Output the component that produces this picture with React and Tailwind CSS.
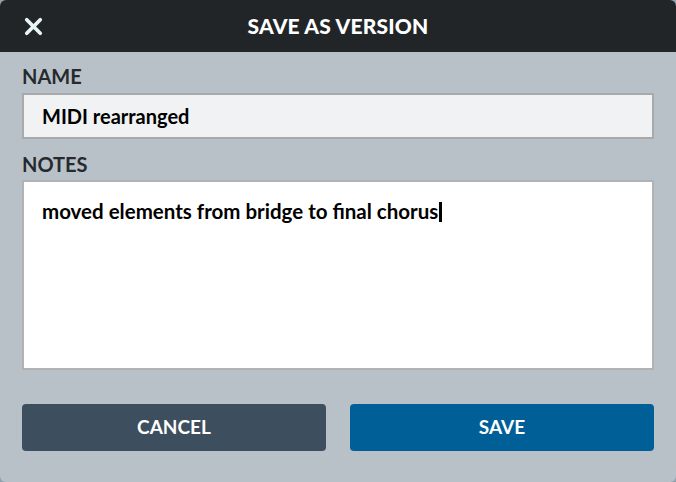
import { X } from "lucide-react";

export default function App() {
  return (
    <div className="h-[482px] w-[676px] bg-[#8fa3ad] font-['Lato',sans-serif]">
      <div className="flex h-full flex-col overflow-hidden rounded-[6px] bg-[#b9c1c8]">
        <div className="relative flex h-[52px] shrink-0 items-center justify-center bg-[#222528]">
          <button className="absolute left-[20px] top-[13px] text-[#e6f4f8]">
            <X size={27} strokeWidth={3.3} />
          </button>
          <h1 className="text-[21px] font-black tracking-[0.2px] text-white">SAVE AS VERSION</h1>
        </div>

        <div className="flex flex-1 flex-col px-[22px]">
          <label className="mt-[10px] text-[20px] font-bold leading-[28px] text-[#262a2e]">NAME</label>
          <div className="mt-[3px] flex h-[46px] items-center border-2 border-[#a7a9ab] bg-[#f1f2f4] px-[18px] pb-[1px] text-[20px] font-bold text-black">
            MIDI rearranged
          </div>

          <label className="mt-[11px] text-[20px] font-bold leading-[28px] text-[#262a2e]">NOTES</label>
          <div className="mt-[2px] h-[190px] border-2 border-[#b0b2b4] bg-white px-[18px] pt-[15px] text-[20.5px] font-bold leading-[28px] text-black">
            moved elements from bridge to final chorus
            <span className="ml-[1px] inline-block h-[20px] w-[3px] translate-y-[3px] bg-black" />
          </div>

          <div className="mt-[34px] flex gap-[24px]">
            <button className="h-[47px] flex-1 rounded-[4px] bg-[#3d4f5e] text-[19px] font-bold text-white">
              CANCEL
            </button>
            <button className="h-[47px] flex-1 rounded-[4px] bg-[#015f98] text-[19px] font-bold text-white">
              SAVE
            </button>
          </div>
        </div>
      </div>
    </div>
  );
}
